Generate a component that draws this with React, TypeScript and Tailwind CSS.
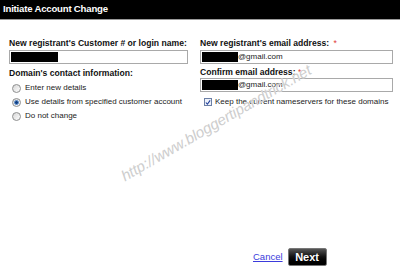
import React from "react";

const font = { fontFamily: '"Liberation Sans", Arial, sans-serif' };

function Radio({ checked }: { checked?: boolean }) {
  return (
    <span className="relative flex h-[9px] w-[9px] items-center justify-center rounded-full border border-[#8e8f8f] bg-gradient-to-br from-[#d6d6d6] to-[#ffffff]">
      {checked && (
        <span className="h-[5px] w-[5px] rounded-full border border-[#5d8fd0] bg-[#123f80]" />
      )}
    </span>
  );
}

function RedactedInput({ text }: { text?: string }) {
  return (
    <div className="flex h-[14px] items-center border border-[#a9a9a9] bg-white p-[1px]">
      <div className={`h-full ${text ? "w-[36px]" : "w-[47px]"} bg-black`} />
      {text && <span className="text-[8px] leading-none text-[#222]">{text}</span>}
    </div>
  );
}

export default function App() {
  return (
    <div className="relative h-[267px] w-[400px] overflow-hidden bg-white text-black" style={font}>
      <div className="flex h-[20px] items-center border-b border-[#9a9a9a] bg-black pl-[3px]">
        <span className="text-[9.6px] font-bold tracking-[-0.2px] text-white">Initiate Account Change</span>
      </div>
      <div className="grid grid-cols-[179px_193px] gap-x-[12px] pl-[9px] pt-[18px]">
        <div className="flex flex-col">
          <div className="h-[12px] text-[8.6px] font-bold leading-[10px] text-[#111]">
            New registrant's Customer # or login name:
          </div>
          <RedactedInput />
          <div className="mt-[4px] h-[11px] text-[8.6px] font-bold leading-[11px] text-[#111]">
            Domain's contact information:
          </div>
          <div className="mt-[2px] flex flex-col pl-[3px]">
            {[
              ["Enter new details", false],
              ["Use details from specified customer account", true],
              ["Do not change", false],
            ].map(([label, checked]) => (
              <div key={label as string} className="flex h-[14px] items-center gap-[4px]">
                <Radio checked={checked as boolean} />
                <span className="text-[8px] text-[#222]">{label as string}</span>
              </div>
            ))}
          </div>
        </div>
        <div className="flex flex-col">
          <div className="h-[12px] text-[8.6px] font-bold leading-[10px] text-[#111]">
            New registrant's email address: <span className="ml-[2px] font-normal text-[#e03a3a]">*</span>
          </div>
          <RedactedInput text="@gmail.com" />
          <div className="mt-[3px] h-[11px] text-[8.6px] font-bold leading-[11px] text-[#111]">
            Confirm email address: <span className="font-normal text-[#e03a3a]">*</span>
          </div>
          <RedactedInput text="@gmail.com" />
          <div className="mt-[4px] flex h-[12px] items-center gap-[3px] pl-[4px]">
            <span className="flex h-[8px] w-[8px] items-center justify-center border border-[#6b7fa6] bg-[#eef2fa]">
              <svg width="7" height="7" viewBox="0 0 7 7">
                <path d="M1 3.5 L2.8 5.5 L6 1" stroke="#1f3f9a" strokeWidth="1.3" fill="none" />
              </svg>
            </span>
            <span className="text-[8px] text-[#222]">Keep the current nameservers for these domains</span>
          </div>
        </div>
      </div>
      <div
        className="pointer-events-none absolute left-[108px] top-[112px] -rotate-30 text-[15px] font-medium italic text-[#cdcdcd]"
        style={{ textShadow: "0 0 1px #fff" }}
      >
        http://www.bloggertipandtrick.net
      </div>
      <div className="absolute left-[253px] top-[248px] flex items-center gap-[5px]">
        <span className="text-[9.5px] text-[#3b3bdc] underline">Cancel</span>
        <span className="flex h-[18px] w-[39px] items-center justify-center rounded-[2px] border border-[#777] bg-gradient-to-b from-[#555] via-[#111] to-[#000] text-[11px] font-bold text-white">
          Next
        </span>
      </div>
    </div>
  );
}
